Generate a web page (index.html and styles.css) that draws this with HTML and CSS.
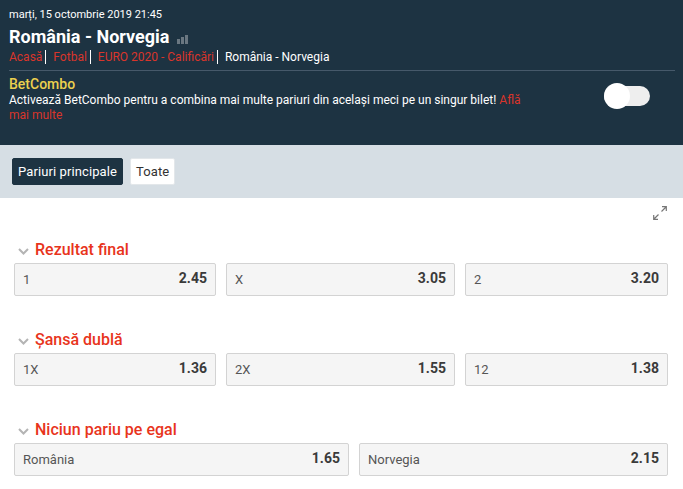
FILE: index.html
```html
<!DOCTYPE html>
<html lang="ro">
<head>
    <meta charset="UTF-8">
    <meta name="viewport" content="width=device-width, initial-scale=1.0">
    <title>România - Norvegia</title>
    <link rel="stylesheet" href="styles.css">
</head>
<body>
    <div class="event-header">
        <div class="event-date">marți, 15 octombrie 2019 21:45</div>
        <div class="event-title">
            <h1>România - Norvegia</h1>
            <svg class="stats-icon" width="11" height="9" viewBox="0 0 11 9"><rect x="0" y="4" width="3" height="5"/><rect x="4" y="2" width="3" height="7"/><rect x="8" y="0" width="3" height="9"/></svg>
        </div>
        <div class="breadcrumb">
            <a>Acasă</a><span class="sep"></span><a>Fotbal</a><span class="sep"></span><a>EURO 2020 - Calificări</a><span class="sep"></span><span class="current">România - Norvegia</span>
        </div>
        <div class="betcombo">
            <div class="betcombo-text">
                <h2>BetCombo</h2>
                <p>Activează BetCombo pentru a combina mai multe pariuri din același meci pe un singur bilet! <a>Află</a> <a>mai multe</a></p>
            </div>
            <div class="toggle"><span class="knob"></span></div>
        </div>
    </div>

    <div class="tabs">
        <button class="tab active">Pariuri principale</button>
        <button class="tab">Toate</button>
    </div>

    <div class="markets">
        <div class="expand-row">
            <svg width="14" height="14" viewBox="0 0 14 14" fill="none" stroke="#777" stroke-width="1.2"><path d="M8.500 5.500 13 1M9 .7h4.300V5M5.500 8.500 1 13M.7 9v4.300H5"/></svg>
        </div>

        <div class="market">
            <div class="market-title"><svg class="chevron" width="11" height="7" viewBox="0 0 11 7" fill="none" stroke="#b4b4b4" stroke-width="2"><path d="M1 1l4.500 4.500L10 1"/></svg><h3>Rezultat final</h3></div>
            <div class="odds odds-three">
                <div class="odd"><span class="odd-label">1</span><span class="odd-value">2.45</span></div>
                <div class="odd"><span class="odd-label">X</span><span class="odd-value">3.05</span></div>
                <div class="odd"><span class="odd-label">2</span><span class="odd-value">3.20</span></div>
            </div>
        </div>

        <div class="market">
            <div class="market-title"><svg class="chevron" width="11" height="7" viewBox="0 0 11 7" fill="none" stroke="#b4b4b4" stroke-width="2"><path d="M1 1l4.500 4.500L10 1"/></svg><h3>Șansă dublă</h3></div>
            <div class="odds odds-three">
                <div class="odd"><span class="odd-label">1X</span><span class="odd-value">1.36</span></div>
                <div class="odd"><span class="odd-label">2X</span><span class="odd-value">1.55</span></div>
                <div class="odd"><span class="odd-label">12</span><span class="odd-value">1.38</span></div>
            </div>
        </div>

        <div class="market">
            <div class="market-title"><svg class="chevron" width="11" height="7" viewBox="0 0 11 7" fill="none" stroke="#b4b4b4" stroke-width="2"><path d="M1 1l4.500 4.500L10 1"/></svg><h3>Niciun pariu pe egal</h3></div>
            <div class="odds odds-two">
                <div class="odd"><span class="odd-label">România</span><span class="odd-value">1.65</span></div>
                <div class="odd"><span class="odd-label">Norvegia</span><span class="odd-value">2.15</span></div>
            </div>
        </div>
    </div>
</body>
</html>
```

FILE: styles.css
```css
* {
    box-sizing: border-box;
}

html, body {
    height: 489px;
    overflow: hidden;
}

body {
    margin: 0;
    font-family: Roboto, "Liberation Sans", sans-serif;
    background: #fff;
    color: #333;
}

.event-header {
    height: 145px;
    padding: 8px 9px 0;
    background: #1d3342;
    color: #fff;
}

.event-date {
    font-size: 11px;
    line-height: 14px;
}

.event-title {
    display: flex;
    align-items: center;
    gap: 8px;
    margin-top: 4px;
    height: 22px;
}

.event-title h1 {
    margin: 0;
    font-size: 18px;
    font-weight: 700;
    line-height: 22px;
}

.stats-icon {
    fill: #6a7781;
    margin-top: 4px;
}

.breadcrumb {
    display: flex;
    align-items: center;
    height: 16px;
    margin-top: 1px;
    font-size: 12px;
    line-height: 16px;
    white-space: nowrap;
}

.breadcrumb a {
    color: #d9352b;
}

.sep {
    width: 1px;
    height: 14px;
    margin: 0 7px 0 3px;
    background: #fff;
}

.betcombo {
    display: flex;
    justify-content: space-between;
    margin-top: 5px;
    margin-right: -1px;
    padding-top: 5px;
    border-top: 1px solid #46596a;
}

.betcombo-text {
    width: 520px;
}

.betcombo h2 {
    margin: 0;
    font-size: 14px;
    font-weight: 500;
    line-height: 17px;
    color: #ecd04e;
}

.betcombo p {
    margin: 0;
    font-size: 12px;
    line-height: 15px;
}

.betcombo p a {
    color: #d9352b;
}

.toggle {
    position: relative;
    width: 46px;
    height: 20px;
    margin: 10px 25px 0 0;
    border-radius: 10px;
    background: #eee;
}

.knob {
    position: absolute;
    left: 0;
    top: -3px;
    width: 26px;
    height: 26px;
    border-radius: 50%;
    background: #fff;
}

.tabs {
    display: flex;
    align-items: center;
    gap: 7px;
    height: 53px;
    padding: 0 12px;
    background: #d6dee4;
}

.tab {
    height: 27px;
    padding: 0 5px;
    border: 1px solid #e3e7ea;
    border-radius: 2px;
    background: #fff;
    color: #333;
    font-family: inherit;
    font-size: 13px;
    letter-spacing: .1px;
}

.tab.active {
    border-color: #1d3342;
    background: #1d3342;
    color: #fff;
}

.markets {
    padding: 8px 15px 0 14px;
}

.expand-row {
    display: flex;
    justify-content: flex-end;
    height: 14px;
    margin-right: 1px;
    margin-bottom: 20px;
}

.market {
    margin-bottom: 34px;
}

.market-title {
    display: flex;
    align-items: center;
    gap: 6px;
    height: 20px;
    padding-left: 4px;
}

.market-title h3 {
    margin: 0;
    font-size: 16px;
    font-weight: 500;
    line-height: 20px;
    color: #e8341c;
}

.chevron {
    margin-top: 2px;
}

.odds {
    display: grid;
    gap: 10px;
    margin-top: 3px;
}

.odds-three {
    grid-template-columns: 202px 1fr 203px;
}

.odds-two {
    grid-template-columns: 335px 1fr;
}

.odd {
    display: flex;
    justify-content: space-between;
    height: 33px;
    padding: 0 8px;
    border: 1px solid #d3d3d3;
    border-radius: 2px;
    background: #f5f5f5;
}

.odd-label {
    padding-top: 8px;
    font-size: 13px;
    line-height: 16px;
    color: #555;
}

.odd-value {
    padding-top: 6px;
    font-size: 14px;
    font-weight: 700;
    line-height: 16px;
    color: #3a3a3a;
}
```
